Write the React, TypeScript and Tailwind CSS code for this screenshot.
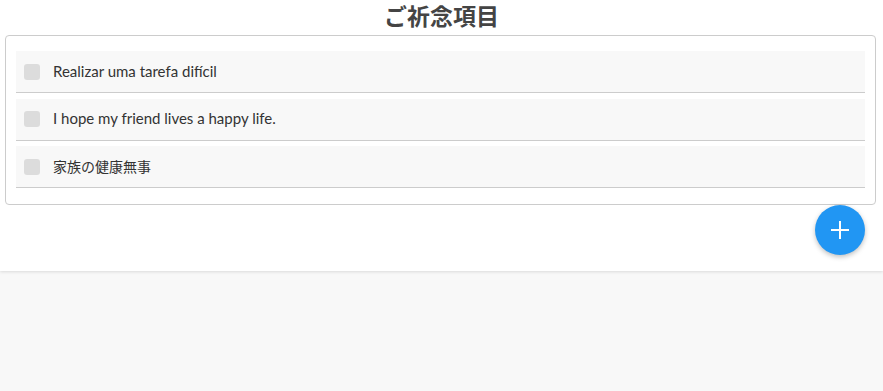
import React from 'react';

type PrayerItem = {
  id: number;
  label: string;
  cjk?: boolean;
};

const items: PrayerItem[] = [
  { id: 1, label: 'Realizar uma tarefa difícil' },
  { id: 2, label: 'I hope my friend lives a happy life.' },
  { id: 3, label: '家族の健康無事', cjk: true },
];

export default function App() {
  return (
    <div
      className="min-h-[391px] bg-[#f8f8f8]"
      style={{ fontFamily: 'Lato, "Noto Sans CJK JP", sans-serif' }}
    >
      <div className="bg-white pb-[16px] shadow-[0_1px_3px_rgba(0,0,0,0.12)]">
        {/* タイトル */}
        <h1 className="h-[35px] text-center text-[23px] font-bold leading-[33px] text-[#444]">
          ご祈念項目
        </h1>

        {/* リスト */}
        <div className="ml-[5px] mr-[7px] rounded-[4px] border border-[#ccc] px-[10px] pt-[9.5px] pb-[10px]">
          {items.map((item) => (
            <div
              key={item.id}
              className="my-[5.5px] flex h-[42px] items-center border-b border-[#ccc] bg-[#f8f8f8] pb-[1px] pl-[8px]"
            >
              <span className="mt-[1px] h-[16px] w-[16px] rounded-[3px] bg-[#dcdcdc]" />
              <span
                className={
                  item.cjk
                    ? 'ml-[13px] text-[14px] text-[#333]'
                    : 'ml-[13px] text-[15px] text-[#333]'
                }
              >
                {item.label}
              </span>
            </div>
          ))}
        </div>

        {/* 追加ボタン */}
        <div className="flex justify-end pr-[18px]">
          <button
            type="button"
            className="flex h-[50px] w-[50px] items-center justify-center rounded-full bg-[#2196f3] shadow-[0_2px_5px_rgba(0,0,0,0.25)]"
          >
            <svg width="20" height="20" viewBox="0 0 20 20" fill="none">
              <path d="M10 1v18M1 10h18" stroke="white" strokeWidth="2" />
            </svg>
          </button>
        </div>
      </div>
    </div>
  );
}
